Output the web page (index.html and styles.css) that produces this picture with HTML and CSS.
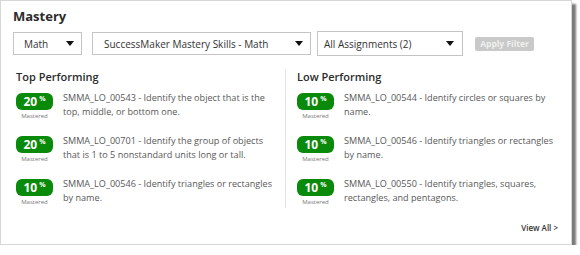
FILE: index.html
```html
<!DOCTYPE html>
<html lang="en">
<head>
  <meta charset="UTF-8" />
  <meta name="viewport" content="width=device-width, initial-scale=1.0" />
  <title>Mastery</title>
  <link rel="stylesheet" href="styles.css">
</head>
<body>
  <div class="card">
    <h2 class="card-title">Mastery</h2>

    <!-- Filters -->
    <div class="filters">
      <div class="dropdown dd-subject"><span>Math</span><i class="caret"></i></div>
      <div class="dropdown dd-product"><span>SuccessMaker Mastery Skills - Math</span><i class="caret"></i></div>
      <div class="dropdown dd-assign"><span>All Assignments (2)</span><i class="caret"></i></div>
      <button class="apply-btn" disabled>Apply Filter</button>
    </div>

    <!-- Performing columns -->
    <div class="columns">
      <div class="col col-top">
        <h3>Top Performing</h3>
        <div class="skill">
          <div class="score"><span class="pill">20<sup>%</sup></span><small>Mastered</small></div>
          <p>SMMA_LO_00543 - Identify the object that is the top, middle, or bottom one.</p>
        </div>
        <div class="skill">
          <div class="score"><span class="pill">20<sup>%</sup></span><small>Mastered</small></div>
          <p>SMMA_LO_00701 - Identify the group of objects that is 1 to 5 nonstandard units long or tall.</p>
        </div>
        <div class="skill">
          <div class="score"><span class="pill">10<sup>%</sup></span><small>Mastered</small></div>
          <p>SMMA_LO_00546 - Identify triangles or rectangles by name.</p>
        </div>
      </div>
      <div class="col col-low">
        <h3>Low Performing</h3>
        <div class="skill">
          <div class="score"><span class="pill">10<sup>%</sup></span><small>Mastered</small></div>
          <p>SMMA_LO_00544 - Identify circles or squares by name.</p>
        </div>
        <div class="skill">
          <div class="score"><span class="pill">10<sup>%</sup></span><small>Mastered</small></div>
          <p>SMMA_LO_00546 - Identify triangles or rectangles by name.</p>
        </div>
        <div class="skill">
          <div class="score"><span class="pill">10<sup>%</sup></span><small>Mastered</small></div>
          <p>SMMA_LO_00550 - Identify triangles, squares, rectangles, and pentagons.</p>
        </div>
      </div>
    </div>

    <div class="view-all">View All &gt;</div>
  </div>
</body>
</html>
```

FILE: styles.css
```css
/* Base */
body {
  margin: 0;
  background: #fff;
  font-family: 'Open Sans', sans-serif;
  color: #333;
}
/* Card */
.card {
  width: 546px;
  height: 243px;
  padding: 0 12px;
  border: 1px solid #d6d6d6;
  background: #fff;
  box-shadow: 4px 4px 2px #7a7a7a;
  display: flex;
  flex-direction: column;
}
.card-title {
  margin: 6px 0 0;
  font-size: 13px;
  line-height: 18px;
  font-weight: 700;
  color: #2b2b2b;
}
/* Filters */
.filters {
  display: flex;
  align-items: center;
  gap: 10px;
  margin-top: 6px;
}
.dropdown {
  box-sizing: border-box;
  height: 23px;
  border: 1px solid #c4c4c4;
  display: flex;
  align-items: center;
  justify-content: space-between;
  padding: 0 7px 0 10px;
  font-size: 10px;
  color: #333;
}
.dd-subject { width: 69px; }
.dd-product { width: 219px; padding-left: 11px; }
.dd-assign { width: 146px; height: 25px; margin-left: -4px; padding-left: 6px; padding-right: 8px; }
.caret {
  width: 0;
  height: 0;
  border-left: 4px solid transparent;
  border-right: 4px solid transparent;
  border-top: 5px solid #111;
}
.apply-btn {
  margin-left: 2px;
  height: 14px;
  width: 59px;
  padding: 0;
  border: none;
  border-radius: 2px;
  background: #c9c9c9;
  color: #efefef;
  font-family: inherit;
  font-size: 8.5px;
  font-weight: 700;
}
/* Columns */
.columns {
  display: grid;
  grid-template-columns: 270px 1fr;
  margin-top: 13px;
  padding-left: 3px;
}
.col {
  display: flex;
  flex-direction: column;
  gap: 16px;
  padding-bottom: 2px;
}
.col-top {
  border-right: 1px solid #e3e3e3;
}
.col-low {
  padding-left: 11px;
}
.col h3 {
  margin: 0 0 -8px;
  font-size: 11px;
  line-height: 16px;
  font-weight: 600;
  color: #2b2b2b;
}
.skill {
  display: flex;
  gap: 10px;
  align-items: flex-start;
}
.col-top .skill p { width: 212px; }
.col-low .skill p { width: 210px; }
.skill p {
  margin: -2px 0 0;
  font-size: 9.1px;
  line-height: 14px;
  color: #585858;
}
.score {
  width: 37px;
  display: flex;
  flex-direction: column;
  align-items: center;
}
.pill {
  width: 37px;
  height: 17px;
  border-radius: 6px;
  background: #0a8a0a;
  color: #fff;
  font-size: 12px;
  font-weight: 700;
  line-height: 17px;
  text-align: center;
}
.pill sup {
  font-size: 7px;
  line-height: 0;
  vertical-align: 5px;
  margin-left: 2px;
}
.score small {
  margin-top: 2px;
  font-size: 6px;
  line-height: 8px;
  color: #777;
}
.view-all {
  margin-top: 14px;
  align-self: flex-end;
  margin-right: 1px;
  font-size: 8px;
  font-weight: 600;
  color: #333;
}
```
